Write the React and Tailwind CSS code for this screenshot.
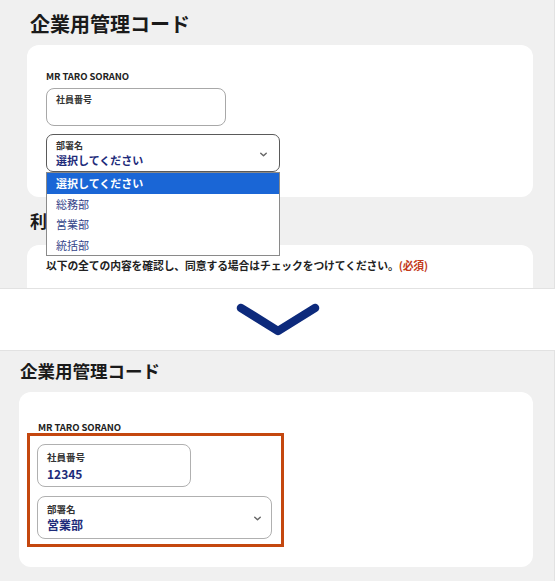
import React from "react";

const font = { fontFamily: '"Noto Sans CJK JP", "Noto Sans", sans-serif' };

function Chevron({ className }) {
  return (
    <svg className={className} viewBox="0 0 10 10" fill="none" stroke="currentColor" strokeWidth="1.3" strokeLinecap="round" strokeLinejoin="round">
      <path d="M2.5 3.8 L5 6.2 L7.5 3.8" />
    </svg>
  );
}

export default function App() {
  return (
    <div className="w-[555px] h-[581px] bg-white overflow-hidden text-[#222]" style={font}>
      {/* Top panel */}
      <div className="h-[289px] bg-[#f0f0f0] border-b border-r border-[#e2e2e2] overflow-hidden pl-[27px] pr-[21px] pt-[10px]">
        <h2 className="ml-[3px] text-[20px] leading-[28px] font-bold text-[#1a1a1a]">企業用管理コード</h2>
        <div className="mt-[7px] bg-white rounded-[12px] h-[152px] px-[19px] pt-[25px]">
          <div className="text-[9.5px] leading-[12px] font-bold text-[#222] tracking-[-0.1px]">MR TARO SORANO</div>
          <div className="mt-[6px] w-[180px] h-[38px] border border-[#a8a8a8] rounded-[8px] px-[9px] pt-[5px]">
            <div className="text-[9px] leading-[12px] font-bold text-[#333]">社員番号</div>
          </div>
          <div className="relative mt-[8px] w-[234px]">
            <div className="h-[38px] border border-[#5a5a5a] rounded-[7px] pl-[9px] pr-[10px] pt-[5px] flex items-start justify-between">
              <div>
                <div className="text-[9px] leading-[12px] font-bold text-[#333]">部署名</div>
                <div className="text-[11px] leading-[16px] font-bold text-[#1d2b7a]">選択してください</div>
              </div>
              <Chevron className="w-[11px] h-[11px] mt-[9px] text-[#666]" />
            </div>
            <div className="absolute left-0 top-[38px] w-[234px] bg-white border border-[#8a8a8a] z-10">
              <div className="h-[21px] bg-[#1a66d6] text-white text-[11px] leading-[21px] font-bold pl-[9px]">選択してください</div>
              <div className="h-[20px] text-[#34458a] text-[11px] leading-[20px] pl-[9px]">総務部</div>
              <div className="h-[21px] text-[#34458a] text-[11px] leading-[21px] pl-[9px]">営業部</div>
              <div className="h-[20px] text-[#34458a] text-[11px] leading-[20px] pl-[9px]">統括部</div>
            </div>
          </div>
        </div>
        <h2 className="ml-[3px] mt-[13px] text-[17px] leading-[22px] font-bold text-[#1a1a1a]">利用規約</h2>
        <div className="mt-[13px] bg-white rounded-[12px] h-[80px] px-[19px] pt-[12px]">
          <p className="text-[10.8px] leading-[16px] font-bold text-[#222] whitespace-nowrap tracking-[-0.1px]">
            以下の全ての内容を確認し、同意する場合はチェックをつけてください。<span className="text-[#c33a1a]">(必須)</span>
          </p>
        </div>
      </div>

      {/* Arrow */}
      <div className="h-[61px] flex items-center justify-center">
        <svg width="84" height="36" viewBox="0 0 84 36" fill="none" className="text-[#0d2a7c]">
          <path d="M5 6 L42 29 L79 6" stroke="currentColor" strokeWidth="8.5" strokeLinecap="round" strokeLinejoin="round" />
        </svg>
      </div>

      {/* Bottom panel */}
      <div className="h-[231px] bg-[#f0f0f0] border-t border-r border-[#e2e2e2] pl-[19px] pr-[21px] pt-[7px]">
        <h2 className="ml-[1px] text-[17.5px] leading-[26px] font-bold text-[#1a1a1a]">企業用管理コード</h2>
        <div className="mt-[8px] bg-white rounded-[12px] h-[175px] pl-[8px] pt-[29px]">
          <div className="ml-[11px] text-[9.5px] leading-[12px] font-bold text-[#222] tracking-[-0.1px]">MR TARO SORANO</div>
          <div className="w-[257px] border-[3px] border-[#c4470f] pl-[7px] pt-[8px] pb-[5px]">
            <div className="w-[154px] h-[43px] border border-[#b0b0b0] rounded-[8px] px-[9px] pt-[6px]">
              <div className="text-[9.5px] leading-[12px] font-bold text-[#333]">社員番号</div>
              <div className="mt-[3px] text-[12px] leading-[15px] font-bold text-[#1d2b7a]">12345</div>
            </div>
            <div className="mt-[9px] w-[235px] h-[43px] border border-[#b0b0b0] rounded-[8px] pl-[9px] pr-[8px] pt-[6px] flex items-start justify-between">
              <div>
                <div className="text-[9.5px] leading-[12px] font-bold text-[#333]">部署名</div>
                <div className="mt-[2px] text-[12px] leading-[15px] font-bold text-[#1d2b7a]">営業部</div>
              </div>
              <Chevron className="w-[11px] h-[11px] mt-[10px] text-[#666]" />
            </div>
          </div>
        </div>
      </div>
    </div>
  );
}
